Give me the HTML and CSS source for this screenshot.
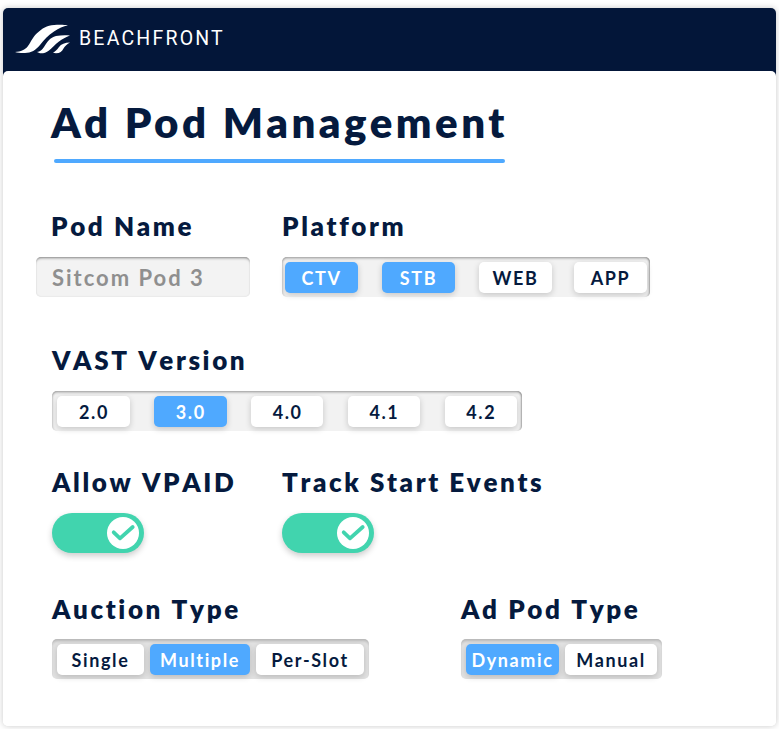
FILE: index.html
```html
<!DOCTYPE html>
<html lang="en">
<head>
<meta charset="utf-8">
<title>Ad Pod Management</title>
<link rel="stylesheet" href="styles.css">
</head>
<body>
<div class="card">
  <header class="topbar">
    <svg class="logo-mark" viewBox="0 0 56 30" width="56" height="30" aria-hidden="true">
      <path d="M0 28C6 27.500 10 26 13 22C16 18 18 12 24 7.500C29 3 34 1 42 .8C46 .6 50 .8 53 1.200C48 2.200 44 4 39 7.500C33 11 29 16 25 21C21 26 16 29 10 29C6 29.200 3 28.800 0 28Z"/>
      <path d="M22 28C25 27.500 27 26 29 23C32 18 35 13.500 41 12C46 11 51 11 55 11.500C51 13 47 15 44 17.500C40 20.500 37 24 34 26.500C31 29 28 29.500 25 29.300Z"/>
      <path d="M38 28.800C40 27.500 42 26 44 23C46 20 50 18.500 55 18.500C52 20 50 22 48.500 24.500C47 27.500 45 29.300 41 29.300Z"/>
    </svg>
    <span class="logo-text">BEACHFRONT</span>
  </header>
  <main class="panel">
    <div class="title-block">
      <h1 class="title">Ad Pod Management</h1>
      <div class="title-rule"></div>
    </div>

    <section class="row row-first">
      <div class="field field-pod">
        <div class="label label-pod">Pod Name</div>
        <div class="name-input">Sitcom Pod 3</div>
      </div>
      <div class="field">
        <div class="label">Platform</div>
        <div class="group group-platform">
          <span class="btn btn-wide on">CTV</span>
          <span class="btn btn-wide on">STB</span>
          <span class="btn btn-wide">WEB</span>
          <span class="btn btn-wide">APP</span>
        </div>
      </div>
    </section>

    <section class="row row-vast">
      <div class="field">
        <div class="label">VAST Version</div>
        <div class="group group-vast">
          <span class="btn btn-wide">2.0</span>
          <span class="btn btn-wide on">3.0</span>
          <span class="btn btn-wide">4.0</span>
          <span class="btn btn-wide">4.1</span>
          <span class="btn btn-wide">4.2</span>
        </div>
      </div>
    </section>

    <section class="row row-toggles">
      <div class="field field-pod">
        <div class="label">Allow VPAID</div>
        <div class="toggle">
          <span class="knob">
            <svg viewBox="0 0 32 32" width="32" height="32" aria-hidden="true"><path class="tick" d="M6.700 15.300L13 21.300L25.700 10"/></svg>
          </span>
        </div>
      </div>
      <div class="field">
        <div class="label">Track Start Events</div>
        <div class="toggle">
          <span class="knob">
            <svg viewBox="0 0 32 32" width="32" height="32" aria-hidden="true"><path class="tick" d="M6.700 15.300L13 21.300L25.700 10"/></svg>
          </span>
        </div>
      </div>
    </section>

    <section class="row row-auction">
      <div class="field field-auction">
        <div class="label">Auction Type</div>
        <div class="group group-tight">
          <span class="btn btn-single">Single</span>
          <span class="btn btn-multiple on">Multiple</span>
          <span class="btn btn-slot">Per-Slot</span>
        </div>
      </div>
      <div class="field">
        <div class="label">Ad Pod Type</div>
        <div class="group group-tight">
          <span class="btn btn-dynamic on">Dynamic</span>
          <span class="btn btn-manual">Manual</span>
        </div>
      </div>
    </section>
  </main>
</div>
</body>
</html>
```
FILE: styles.css
```css
* { box-sizing: border-box; }
html, body { margin: 0; padding: 0; }
body {
  background: #fff;
  padding: 8px 3px 3px;
  font-family: Lato, "Liberation Sans", sans-serif;
  color: #051a3e;
}
.card {
  width: 773px;
  height: 718px;
  border-radius: 5px;
  background: linear-gradient(#031639 72px, transparent 72px);
  box-shadow: 0 0 6px rgba(0, 0, 0, .22);
}
.topbar {
  height: 63px;
  display: flex;
  align-items: center;
  padding: 0 0 2px 12px;
  gap: 8px;
}
.logo-mark { fill: #fff; display: block; }
.logo-text {
  font-family: Roboto, sans-serif;
  font-size: 19.500px;
  font-weight: 400;
  letter-spacing: 2.200px;
  color: #fff;
  line-height: 1;
}
.panel {
  height: 655px;
  background: #fff;
  border-radius: 5px;
  padding: 27px 0 0 49px;
}
.title-block { width: 460px; }
.title {
  margin: 0 0 0 -1px;
  font-size: 42px;
  font-weight: 800;
  line-height: 48px;
  letter-spacing: 3.500px;
  white-space: nowrap;
}
.title-rule {
  height: 4px;
  width: 451px;
  margin: 13px 0 0 2px;
  border-radius: 2px;
  background: #4fa9ff;
}
.row { display: flex; }
.row-first { margin-top: 47px; }
.row-vast { margin-top: 47px; }
.row-toggles { margin-top: 35px; }
.row-auction { margin-top: 40px; }
.row-auction .label { margin-bottom: 14px; }
.field-pod { width: 230px; }
.field-auction { width: 409px; }
.label {
  font-size: 26px;
  font-weight: 800;
  line-height: 32px;
  letter-spacing: 2.600px;
  margin-bottom: 15px;
  white-space: nowrap;
  font-kerning: none;
}
.label-pod { margin-left: -1px; }
.name-input {
  width: 214px;
  height: 40px;
  margin-left: -16px;
  padding-left: 16px;
  border-radius: 5px;
  background: #f3f3f3;
  box-shadow: inset 0 3px 3px -2px rgba(0, 0, 0, .45), inset 0 0 2px rgba(0, 0, 0, .12);
  font-size: 22px;
  font-weight: 700;
  line-height: 42px;
  letter-spacing: 2px;
  color: #8f8f8f;
}
.group {
  display: inline-flex;
  height: 40px;
  padding: 5px 5px 0;
  border-radius: 5px;
  background: #f2f2f2;
  box-shadow: inset 0 3px 3px -2px rgba(0, 0, 0, .4), inset -3px 0 2px -2px rgba(0, 0, 0, .32), inset 3px 0 2px -2px rgba(0, 0, 0, .16);
}
.group-platform { gap: 24px; width: 368px; padding-left: 3px; padding-right: 3px; }
.group-platform .btn:nth-child(4) { margin-left: -2px; }
.group-vast { gap: 24.400px; width: 470px; padding-left: 5.300px; }
.group-vast .btn { text-indent: 1px; }
.group-tight { gap: 6px; background: #e2e2e2; box-shadow: inset 0 3px 3px -1px rgba(0, 0, 0, .2); }
.btn {
  display: block;
  height: 31px;
  border-radius: 5px;
  background: #fff;
  box-shadow: 0 2px 6px rgba(0, 0, 0, .18);
  font-size: 18px;
  font-weight: 700;
  line-height: 33px;
  letter-spacing: 1.600px;
  text-align: center;
  color: #051a3e;
}
.btn.on { background: #4fa9ff; color: #fff; }
.btn-wide { width: 73px; }
.btn-single { width: 87px; }
.btn-multiple { width: 100px; }
.btn-slot { width: 108px; }
.btn-dynamic { width: 93px; }
.btn-manual { width: 92px; }
.toggle {
  width: 92px;
  height: 40px;
  margin-top: 1px;
  padding: 4px 5px;
  display: flex;
  justify-content: flex-end;
  border-radius: 20px;
  background: #41d4ae;
  box-shadow: 0 3px 6px rgba(0, 0, 0, .2);
}
.knob {
  display: block;
  width: 32px;
  height: 32px;
  border-radius: 50%;
  background: #fff;
}
.knob svg { display: block; }
.tick {
  fill: none;
  stroke: #41d4ae;
  stroke-width: 3.800;
  stroke-linecap: round;
  stroke-linejoin: round;
}
```
